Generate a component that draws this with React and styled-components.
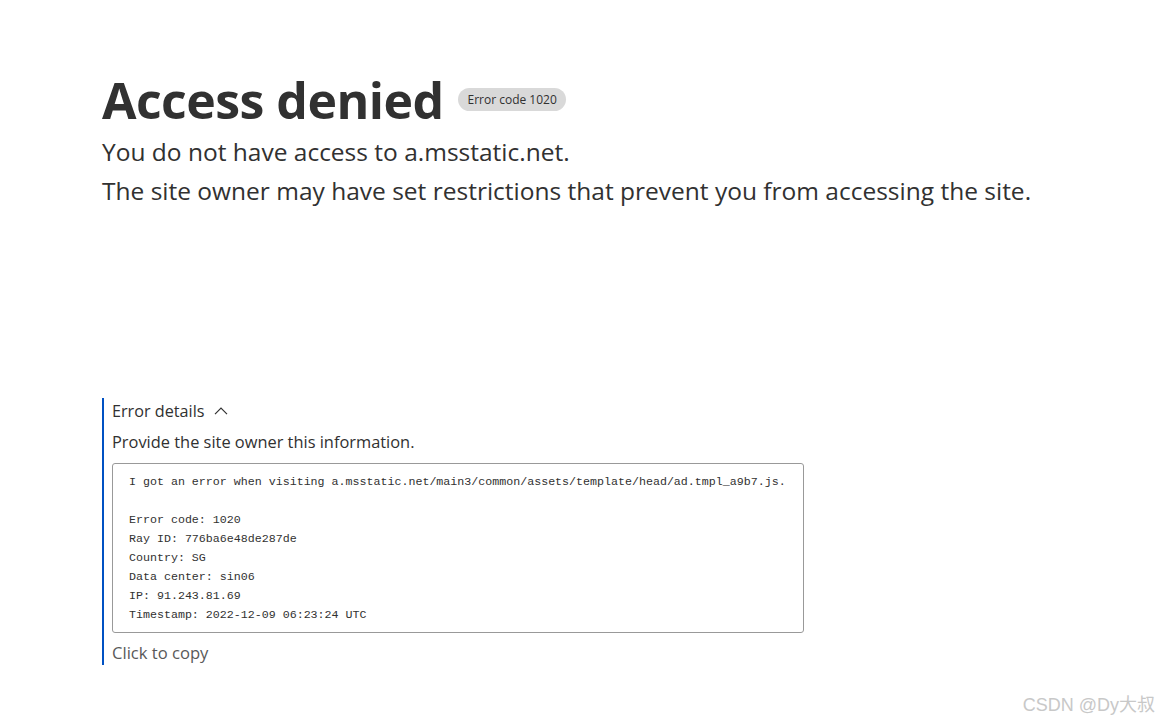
import React from "react";
import styled, { createGlobalStyle } from "styled-components";

const Global = createGlobalStyle`
  html, body { margin: 0; padding: 0; background: #fff; }
  body { font-family: "Open Sans", "Noto Sans", sans-serif; color: #313131; }
`;

const Page = styled.div`
  position: relative;
  width: 1159px;
  height: 722px;
  overflow: hidden;
  box-sizing: border-box;
  padding: 68px 0 0 102px;
`;

const HeaderRow = styled.div`
  display: flex;
  align-items: center;
  gap: 15px;
`;

const Title = styled.h1`
  margin: 0;
  font-size: 50px;
  font-weight: 700;
  line-height: 64px;
  color: #313131;
  letter-spacing: -0.55px;
`;

const Badge = styled.span`
  display: inline-flex;
  align-items: center;
  height: 23px;
  padding: 0 9px;
  border-radius: 12px;
  background: #d9d9d9;
  font-size: 12px;
  color: #313131;
  margin-top: -2px;
`;

const Lead = styled.p`
  margin: 0;
  font-size: 24.5px;
  line-height: 39px;
  color: #313131;
`;

const Details = styled.section`
  margin-top: 188px;
  border-left: 2px solid #0051c3;
  padding: 0 0 0 8px;
  width: 700px;
`;

const Summary = styled.div`
  display: flex;
  align-items: center;
  gap: 10px;
  font-size: 16.2px;
  line-height: 24px;
  color: #313131;
  padding-top: 1px;
`;

const Hint = styled.p`
  margin: 7px 0 9px;
  font-size: 16.4px;
  line-height: 24px;
  color: #313131;
`;

const CodeBox = styled.pre`
  margin: 0;
  box-sizing: border-box;
  width: 692px;
  height: 170px;
  border: 1px solid #999;
  border-radius: 3px;
  padding: 8px 16px;
  font-family: "Liberation Mono", "DejaVu Sans Mono", monospace;
  font-size: 11.65px;
  line-height: 19px;
  color: #313131;
  white-space: pre;
`;

const Copy = styled.div`
  margin-top: 8px;
  font-size: 16.6px;
  line-height: 24px;
  color: #595959;
`;

const Watermark = styled.div`
  position: absolute;
  right: 4px;
  bottom: 6px;
  font-family: "Liberation Sans", "Noto Sans CJK SC", sans-serif;
  font-size: 18px;
  color: #c8c8c8;
`;

const Chevron = () => (
  <svg width="14" height="8" viewBox="0 0 14 8" fill="none">
    <path d="M1 7.2L7 1.2L13 7.2" stroke="#313131" strokeWidth="1.2" />
  </svg>
);

const info = `I got an error when visiting a.msstatic.net/main3/common/assets/template/head/ad.tmpl_a9b7.js.

Error code: 1020
Ray ID: 776ba6e48de287de
Country: SG
Data center: sin06
IP: 91.243.81.69
Timestamp: 2022-12-09 06:23:24 UTC`;

export default function App() {
  return (
    <Page>
      <Global />
      <HeaderRow>
        <Title>Access denied</Title>
        <Badge>Error code 1020</Badge>
      </HeaderRow>
      <Lead>You do not have access to a.msstatic.net.</Lead>
      <Lead>The site owner may have set restrictions that prevent you from accessing the site.</Lead>
      <Details>
        <Summary>
          Error details <Chevron />
        </Summary>
        <Hint>Provide the site owner this information.</Hint>
        <CodeBox>{info}</CodeBox>
        <Copy>Click to copy</Copy>
      </Details>
      <Watermark>CSDN @Dy大叔</Watermark>
    </Page>
  );
}
